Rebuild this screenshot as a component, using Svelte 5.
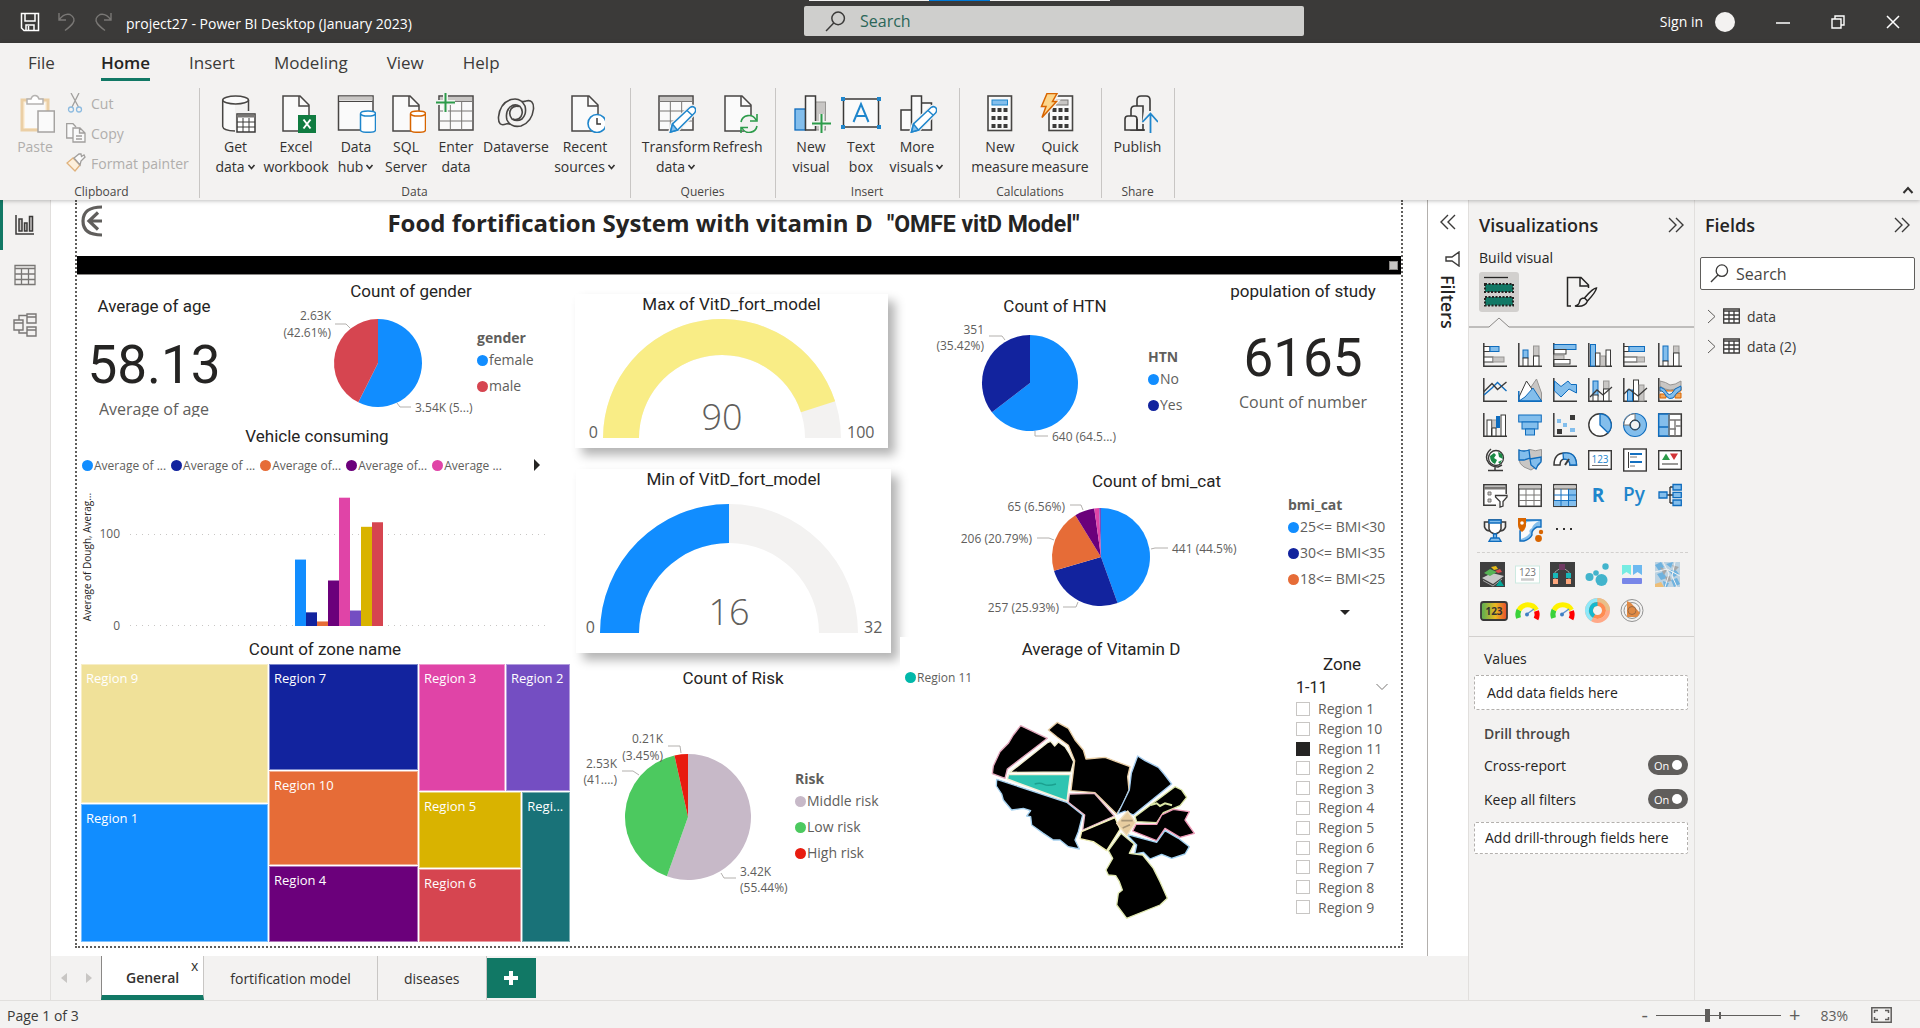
<script>
	let search = $state('')
	let fieldSearch = $state('')
	let zoom = $state(83)
	let activePage = $state('General')
	let crossReport = $state(true)
	let keepFilters = $state(true)

	const menu = ['File', 'Home', 'Insert', 'Modeling', 'View', 'Help']
	const pages = ['General', 'fortification model', 'diseases']
	const tables = ['data', 'data (2)']

	// shared bits of the ribbon icons
	const dark = '#484644'
	const sheet = `<path d="M7 3H24L33 12V38H7Z" fill="#fafafa" stroke="${dark}" stroke-width="1.5"/><path d="M23 3V13H33" fill="none" stroke="${dark}" stroke-width="1.5"/>`
	const pencil = `<path d="M14 39.500L16.500 31L34 14.500Q37 12.500 39 15Q40.500 17.500 38.500 20L21.500 37Z" fill="#fff" stroke="#f3f2f1" stroke-width="4"/><path d="M14.500 39L16.500 31L34 14.500Q37 12.500 39 15Q40.500 17.500 38.500 20L21.500 37Z" fill="#fff" stroke="#1f86cc" stroke-width="1.500"/><path d="M14.500 39L16.500 31L21.500 37Z" fill="#83beec" stroke="#1f86cc" stroke-width="1.500"/><path d="M31 17.500L36 22" stroke="#1f86cc" stroke-width="1.500"/>`
	const cylinder = (color) =>
		`<path d="M24.500 21V37Q24.500 39.300 32 39.300T39.500 37V21" fill="#fff" stroke="${color}" stroke-width="1.500"/><ellipse cx="32" cy="20.500" rx="7.500" ry="2.600" fill="#fff" stroke="${color}" stroke-width="1.500"/>`
	const keys = (x) =>
		[17, 25, 33].map((y) => [0, 6, 12].map((d) => `<rect x="${x + d}" y="${y - 2}" width="4" height="4" fill="#3b3a39"/>`).join('')).join('')
	const grid = (x, y, w, h) =>
		`<rect x="${x}" y="${y}" width="${w}" height="${h}" fill="#fafafa" stroke="${dark}" stroke-width="1.500"/><rect x="${x + 1}" y="${y + 1}" width="${w - 2}" height="4" fill="#c8c6c4"/><path d="M${x} ${y + 5.5}H${x + w}M${x} ${y + 15}H${x + w}M${x} ${y + 25}H${x + w}M${x + w / 3} ${y + 5.5}V${y + h}M${x + (w * 2) / 3} ${y + 5.5}V${y + h}" stroke="#797775"/>`

	const ribbon = [
		{
			label: 'Data',
			items: [
				{ w: 51, lines: ['Get', 'data'], menu: true, icon: `<path d="M6.700 7V34Q7 37 19 38.500V11H33V7" fill="#fafafa"/><path d="M6.700 7V33.500Q7 37.500 19 38M32.500 7V18" fill="none" stroke="${dark}" stroke-width="1.500"/><ellipse cx="19.600" cy="7" rx="12.900" ry="4" fill="#fafafa" stroke="${dark}" stroke-width="1.500"/><rect x="21" y="21" width="18" height="18" fill="#fff" stroke="#3b3a39" stroke-width="1.500"/><path d="M21 23H39" stroke="#797775" stroke-width="3"/><path d="M21 29H39M21 34H39M27 25V39M33 25V39" stroke="#3b3a39"/>` },
				{ w: 70, lines: ['Excel', 'workbook'], icon: `${sheet}<rect x="22" y="22" width="18" height="18" fill="#107c41"/><path d="M27.500 26.500L34.500 35.500M34.500 26.500L27.500 35.500" stroke="#fff" stroke-width="2"/>` },
				{ w: 50, lines: ['Data', 'hub'], menu: true, icon: `<rect x="2.500" y="3" width="34.500" height="34" fill="#fafafa" stroke="${dark}" stroke-width="1.500"/><path d="M3 5.500H36.500" stroke="#c8c6c4" stroke-width="4"/><path d="M3 8.500H36.500" stroke="${dark}"/>${cylinder('#1f86cc')}` },
				{ w: 50, lines: ['SQL', 'Server'], icon: `${sheet}${cylinder('#d86500')}` },
				{ w: 50, lines: ['Enter', 'data'], icon: `${grid(3, 3, 34, 34)}<path d="M9.500 0V19M0 9.500H19" stroke="#f3f2f1" stroke-width="5"/><path d="M9.500 0V19M0 9.500H19" stroke="#2c9b4a" stroke-width="2"/>` },
				{ w: 70, lines: ['Dataverse'], icon: `<g fill="none" stroke="${dark}" stroke-width="1.600"><path d="M10 31Q2 34 2.500 24Q4 10 15 6.500Q25 4 29 13Q31 21 26 26Q21 29 16 26Q12 21 15 16Q18 12 23 13.500"/><path d="M30 8Q38 6 37.500 16Q36 29 25 33Q15 35 11 27Q9 19 14 14Q19 10 24 13.500Q28 18 25 23.500Q22 28 17 26"/><path d="M10 31Q13 30 14 31.500M30 8Q27 9 26 8"/></g>` },
				{ w: 68, lines: ['Recent', 'sources'], menu: true, icon: `${sheet}<circle cx="32" cy="30.500" r="9" fill="#fff" stroke="#1f86cc" stroke-width="1.600"/><path d="M32 25V31H36" fill="none" stroke="#3b3a39" stroke-width="1.500"/>` }
			]
		},
		{
			label: 'Queries',
			items: [
				{ w: 70, lines: ['Transform', 'data'], menu: true, icon: grid(3, 3, 34, 34) + pencil },
				{ w: 53, lines: ['Refresh'], icon: `${sheet}<circle cx="31" cy="31" r="9" fill="#f3f2f1"/><path d="M23 29A8 8 0 0 1 38 27M39 33A8 8 0 0 1 24 35M39 21V28H32M23 41V34.500H30" fill="none" stroke="#2c9b4a" stroke-width="1.600"/>` }
			]
		},
		{
			label: 'Insert',
			items: [
				{ w: 50, lines: ['New', 'visual'], icon: `<rect x="4" y="16" width="10.500" height="21" fill="#83beec" stroke="#0f6cbd" stroke-width="1.300"/><rect x="24.500" y="9" width="10" height="28" fill="#c8c6c4" stroke="#979593"/><rect x="14.500" y="3" width="10" height="34" fill="#fafafa" stroke="#3b3a39" stroke-width="1.500"/><path d="M30.500 21V40M21 30.500H40" stroke="#f3f2f1" stroke-width="5"/><path d="M30.500 21V40M21 30.500H40" stroke="#2c9b4a" stroke-width="2"/>` },
				{ w: 50, lines: ['Text', 'box'], icon: `<rect x="2.500" y="6" width="35" height="28" fill="#fafafa" stroke="#3b3a39" stroke-width="1.500"/><path d="M0 4H4V8H0ZM36 4H40V8H36ZM0 32H4V36H0ZM36 32H40V36H36Z" fill="#1f86cc"/><path d="M12.500 29L20 11L27.500 29M15 23H25" fill="none" stroke="#1f86cc" stroke-width="2"/>` },
				{ w: 62, lines: ['More', 'visuals'], menu: true, icon: `<path d="M4 17H14.500V37H4ZM24.500 10H34.500V37H24.500ZM14.500 3H24.500V37H14.500Z" fill="#fafafa" stroke="#3b3a39" stroke-width="1.500"/>${pencil}` }
			]
		},
		{
			label: 'Calculations',
			items: [
				{ w: 60, lines: ['New', 'measure'], icon: `<rect x="8" y="3" width="23.500" height="34.500" fill="#fafafa" stroke="${dark}" stroke-width="1.600"/><rect x="12" y="7" width="15.500" height="5" fill="#83beec" stroke="#1f86cc"/>${keys(11.5)}` },
				{ w: 60, lines: ['Quick', 'measure'], icon: `<rect x="9" y="3" width="23.500" height="34.500" fill="#fafafa" stroke="${dark}" stroke-width="1.600"/><rect x="16" y="7" width="12" height="5" fill="#c8c6c4" stroke="#797775"/>${keys(12.5)}<path d="M7 .5H17L12.500 8.500H16.500L2 24.500L6 13.500H1.500Z" fill="#fcd68b" stroke="#f3f2f1" stroke-width="4"/><path d="M7 .5H17L12.500 8.500H16.500L2 24.500L6 13.500H1.500Z" fill="#fcd68b" stroke="#d86500" stroke-width="1.500"/>` }
			]
		},
		{
			label: 'Share',
			items: [
				{ w: 51, lines: ['Publish'], icon: `<g fill="#f3f2f1" stroke="#3b3a39" stroke-width="1.600"><path d="M19 37V7Q19 3 23 3H28Q32 3 32 7V37Z"/><path d="M13 37V17Q13 13 17 13H25V37Z"/><path d="M7 37V26Q7 23 10 23H16Q19 23 19 26V37Z"/><path d="M19 37V26" /></g><path d="M26 18H40V40H27V31H24Z" fill="#f3f2f1"/><path d="M26 37H19" stroke="#3b3a39" stroke-width="1.600"/><path d="M32.500 40V21M24.500 29L32.500 20.500L40 29" fill="none" stroke="#1f86cc" stroke-width="1.800"/>` }
			]
		}
	]

	// visual gallery, drawn on a 24px square
	const axis = '<path d="M.8 0V23.200H24" fill="none" stroke="#3b3a39" stroke-width="1.500"/>'
	const b = 'fill="#83beec" stroke="#0f6cbd"'
	const g = 'fill="#c8c6c4" stroke="#979593"'
	const w = 'fill="#fff" stroke="#3b3a39"'
	const gallery = [
		['Stacked bar chart', `${axis}<rect x="1" y="3.500" width="6" height="5" ${w}/><rect x="7" y="3.500" width="9" height="5" ${b}/><rect x="1" y="14" width="9" height="5" ${w}/><rect x="10" y="14" width="11" height="5" ${g}/>`],
		['Stacked column chart', `${axis}<rect x="5" y="7" width="5" height="8" ${b}/><rect x="5" y="15" width="5" height="8" ${w}/><rect x="15.500" y="3" width="5.500" height="10" ${g}/><rect x="15.500" y="13" width="5.500" height="10" ${w}/>`],
		['Clustered bar chart', `${axis}<rect x="1" y="1.500" width="22" height="5" ${b}/><rect x="1" y="6.500" width="12" height="4.500" ${w}/><rect x="1" y="12" width="10" height="4.500" ${g}/><rect x="1" y="16.500" width="16" height="4.500" ${w}/>`],
		['Clustered column chart', `${axis}<rect x="2.500" y="1.500" width="5" height="21.500" ${b}/><rect x="7.500" y="10" width="4.500" height="13" ${w}/><rect x="12.500" y="13" width="5" height="10" ${g}/><rect x="18" y="7" width="4.500" height="16" ${w}/>`],
		['100% stacked bar chart', `${axis}<rect x="1" y="3.500" width="5" height="5" ${w}/><rect x="6" y="3.500" width="15.500" height="5" ${b}/><rect x="1" y="14" width="13" height="5" ${w}/><rect x="14" y="14" width="7.500" height="5" ${g}/>`],
		['100% stacked column chart', `${axis}<rect x="5" y="3" width="5" height="15" ${b}/><rect x="5" y="18" width="5" height="5" ${w}/><rect x="15.500" y="3" width="5.500" height="7" ${g}/><rect x="15.500" y="10" width="5.500" height="13" ${w}/>`],
		['Line chart', `${axis}<path d="M1 17L9 10L14.500 4.500L23.500 13" fill="none" stroke="#0f6cbd" stroke-width="1.400"/><path d="M1 13.500L9 5.500L14.500 11.500L23.500 4" fill="none" stroke="#3b3a39" stroke-width="1.400"/>`],
		['Area chart', `<path d="M11 12L18.500 1L23.500 15V23H16Z" ${g}/><path d="M1 19L8.500 3L16 14L9 23H1Z" ${w}/><path d="M1 23L7 19L15 10L23.500 23Z" ${b}/><path d="M.8 13V23.200H24" fill="none" stroke="#0f6cbd" stroke-width="1.500"/>`],
		['Stacked area chart', `${axis}<path d="M1.500 3L8 8.500L15 3L18 6.500H23.500V15L16 11L8 19L1.500 13Z" ${b}/>`],
		['Line and stacked column chart', `${axis}<rect x="5" y="3" width="5" height="15" ${b}/><rect x="5" y="17" width="5" height="6" ${w}/><rect x="15.500" y="3" width="5.500" height="8" ${g}/><rect x="15.500" y="11" width="5.500" height="12" ${w}/><path d="M2 19L9 12L15 17L24 9" fill="none" stroke="#3b3a39" stroke-width="1.300"/>`],
		['Line and clustered column chart', `${axis}<rect x="4.500" y="12" width="5" height="11" ${b}/><rect x="10.500" y="2" width="5" height="21" ${w}/><rect x="16" y="7" width="5" height="16" ${g}/><path d="M1 16L6 11L15 18L24 10" fill="none" stroke="#3b3a39" stroke-width="1.300"/>`],
		['Ribbon chart', `${axis}<path d="M2 16H8V20H2ZM17 15H23V20H17ZM2 9H23V13H2Z" fill="#f2a65a" stroke="#d86500"/><path d="M2 3Q8 4 12 7Q17 7 23 3V8Q17 12 12 12Q7 12 2 8Z" ${g}/><path d="M2 9Q7 10 10 16Q13 18 17 11L23 8V12Q19 14 15 20Q11 22 8 18Q5 12 2 13Z" ${b}/>`],
		['Waterfall chart', `${axis}<rect x="4" y="7" width="4.500" height="16" ${w}/><rect x="9" y="7" width="4.500" height="8" ${g}/><path d="M13 3H17V15H13Z" fill="#0f6cbd"/><path d="M9 15H13V23H9Z" fill="#fff" stroke="#3b3a39"/><rect x="18" y="2" width="4.500" height="21" ${w}/>`],
		['Funnel', `<rect x=".7" y="2" width="22.600" height="7" ${b}/><rect x="4" y="9" width="16" height="7" ${b}/><rect x="7.500" y="16" width="9" height="6" ${b}/>`],
		['Scatter chart', `${axis}<path d="M17 2H22V7H17ZM4 16H9V21H4Z" fill="#3b3a39"/><path d="M4 6H8V10H4ZM10 10H14V14H10ZM17 15H22V19H17Z" fill="#83beec"/>`],
		['Pie chart', `<circle cx="12" cy="12" r="11.200" ${w} stroke-width="1.400"/><path d="M12 .8A11.200 11.200 0 0 1 20 19.800L12 12Z" ${b} stroke-width="1.300"/>`],
		['Donut chart', `<circle cx="12" cy="12" r="8" fill="none" stroke="#0f6cbd" stroke-width="8"/><circle cx="12" cy="12" r="8" fill="none" stroke="#83beec" stroke-width="5.800"/><path d="M.8 12A11.200 11.200 0 0 1 12 .8V7A5 5 0 0 0 7 12Z" fill="#fff" stroke="#797775"/><circle cx="12" cy="12" r="5" fill="none" stroke="#3b3a39"/>`],
		['Treemap', `<rect x=".7" y="1" width="22.600" height="22" fill="#fff" stroke="#3b3a39" stroke-width="1.500"/><path d="M.7 1H11V23H.7ZM.7 14H11" ${b} stroke-width="1.400"/><path d="M11 7H23M11 16H18M18 13H23M17 7V23M11 1V23" stroke="#797775" stroke-width="1.400"/>`],
		['Map', `<circle cx="13" cy="10" r="7.500" fill="#fff" stroke="#3b3a39" stroke-width="1.300"/><path d="M7 8L11 5L13 7L11 10L14 12L12 16Q7 14 7 8ZM15 4L19 6L20 11L16 9ZM15 14L19 12L17 16Z" fill="#1a8a45"/><path d="M8 1Q2 6 4 12Q7 19 15 19L19 17M12 19V22M5 22.500H20" fill="none" stroke="#3b3a39" stroke-width="1.500"/>`],
		['Filled map', `<path d="M1 2Q6 5 12 1.500Q17 4 23.500 1.500V12L21 17L13 22L6 19Q1 16 1 11Z" ${g}/><path d="M1 2Q5 4 11 2L12 10L6 12H1ZM12 11L23 9V14L20 17L18 21L13 17Z" ${b} stroke-width="1.300"/>`],
		['Gauge', `<path d="M1 17Q1 5 12 5T23.500 17H17Q17 11 12 11T7 17Z" fill="#fff" stroke="#3b3a39" stroke-width="1.500"/><path d="M10 5.200Q23 3 23.500 17H17Q16.500 11 10.500 11Z" ${b} stroke-width="1.300"/><path d="M12 17L16 11" stroke="#3b3a39" stroke-width="2"/>`],
		['Card', `<rect x=".7" y="2.700" width="22.600" height="18.600" ${w} stroke-width="1.400"/><text x="12" y="14.500" text-anchor="middle" font-size="10" fill="#1f86cc">123</text><path d="M4 17.500H20" stroke="#797775"/>`],
		['Multi-row card', `<rect x=".7" y="1" width="22.600" height="22" ${w} stroke-width="1.400"/><path d="M5.500 4V20" stroke="#3b3a39"/><path d="M7 6H19M7 14H19" stroke="#1470c0" stroke-width="2"/><path d="M7 9H14M7 18H12" stroke="#797775"/>`],
		['KPI', `<rect x=".7" y="2.700" width="22.600" height="18.600" ${w} stroke-width="1.400"/><path d="M4 12L8 5.500L12 12Z" fill="#2c9b4a"/><path d="M12 5.500H20L16 12Z" fill="#d13438"/><path d="M4 16H20" stroke="#797775" stroke-width="1.500"/>`],
		['Slicer', `<path d="M13 22.300H.8V1.700H23.200V11" fill="#fff" stroke="#3b3a39" stroke-width="1.500"/><path d="M1 5H23" stroke="#797775" stroke-width="3"/><path d="M5 9H8V12H5ZM5 16H8V19H5Z" fill="#c8c6c4" stroke="#797775"/><path d="M12.500 12.500H24V14L20 18.500V23L17 24V18.500L12.500 14Z" ${w} stroke-width="1.300"/>`],
		['Table', `<rect x=".8" y="1.700" width="22.400" height="21.600" fill="#fff" stroke="#3b3a39" stroke-width="1.500"/><path d="M1 4H23" stroke="#c8c6c4" stroke-width="3"/><path d="M1 6H23" stroke="#3b3a39"/><path d="M1 12H23M1 17.500H23M8 6V23M16 6V23" stroke="#797775"/>`],
		['Matrix', `<rect x=".8" y="1.700" width="22.400" height="21.600" fill="#fff" stroke="#3b3a39" stroke-width="1.500"/><path d="M15.500 6H23V23H1V17.500H15.500Z" fill="#83beec"/><path d="M1 4H23" stroke="#c8c6c4" stroke-width="3"/><path d="M1 6H23" stroke="#3b3a39"/><path d="M1 12H23M1 17.500H23M8 6V23M15.500 6V23" stroke="#1470c0"/>`],
		['R script visual', '<text x="10" y="19" text-anchor="middle" font-size="19" font-weight="700" fill="#1f86cc">R</text>'],
		['Python visual', '<text x="11" y="18" text-anchor="middle" font-size="19" font-weight="600" fill="#1f86cc">Py</text>'],
		['Decomposition tree', `<path d="M9 12H16M12 4V20M12 4H16M12 20H16" fill="none" stroke="#3b3a39" stroke-width="1.400"/><path d="M1 9H9V15H1ZM15 1.500H23.300V7H15ZM15 9.300H23.300V14.700H15ZM15 17H23.300V22.500H15Z" ${b} stroke-width="1.300"/>`],
		['Key influencers', `<path d="M6 4H1.500V9Q3 13 7 13M18 4H22.500V9Q21 13 17 13" fill="none" stroke="#3b3a39" stroke-width="1.600"/><path d="M6 2H18V11Q17 15 12 16Q7 15 6 11Z" ${w} stroke-width="1.500"/><path d="M6 2H18V5H6ZM8 20H16L18 23.300H6ZM10.500 16H13.500V20H10.500Z" ${b} stroke-width="1.300"/>`],
		['Azure map', `<path d="M8 2H23V9H19Q13 12 14 17Q12 21 6 23H2V13Z" ${b} stroke-width="1.400"/><path d="M9 4L21 3Q15 6 14 10Q10 12 12 15Q8 20 3 21V13Z" fill="#fafafa"/><path d="M0 0H8V8Q7 12 4 14Q0 11 0 7Z" fill="#d86500"/><circle cx="4" cy="5" r="1.800" fill="#fff"/><circle cx="20.500" cy="20.500" r="3.400" fill="#d86500"/><circle cx="23" cy="14" r="2.200" fill="#d86500"/>`],
		['Get more visuals', '<path d="M3 10H5V12H3ZM10 10H12V12H10ZM17 10H19V12H17Z" fill="#323130"/>']
	]

	const dial =
		'<g fill="none" stroke-width="5"><path d="M3.500 20A10 10 0 0 1 4 12" stroke="#3ad23a"/><path d="M4 12A10 10 0 0 1 21.500 12" stroke="#fff200"/><path d="M21.500 13A10 10 0 0 1 21 21" stroke="#f00"/></g><path d="M12 16L19 11" stroke="#5a93cf" stroke-width="1.500"/><circle cx="12" cy="16.500" r="2" fill="#3f7fc4"/>'
	const custom = [
		['Synoptic panel', '<path d="M0 0H25V25H0Z" fill="#3f3f3f"/><path d="M2 16L12 11L24 14L13 22Z" fill="#c8c8c8"/><path d="M3 18.500L13 24L22 17" fill="none" stroke="#a5a5a5"/><path d="M4 11L10 7L17 10L10 14Z" fill="#56b356"/><path d="M11 5L16 4L18 7L14 8Z" fill="#e8bd17"/><path d="M15 9L20 7L22 10L18 11Z" fill="#dc4b4b"/><path d="M16 24L20 18L24 24Z" fill="#01a89a"/>'],
		['Card with states', '<rect x=".5" y="4" width="24" height="17" fill="#fff" stroke="#cdeae1"/><text x="12.500" y="13.500" text-anchor="middle" font-size="10" fill="#777">123</text><path d="M6 17.500H19" stroke="#ccc" stroke-width="2.500"/>'],
		['Hierarchy', '<path d="M0 0H25V25H0Z" fill="#3f3f3f"/><path d="M5 12V10L12 5L19 10V20M5 12V20" fill="none" stroke="#999"/><path d="M9 2H15V8H9Z" fill="#6f3a62"/><path d="M3 11H8V16H3ZM16 11H21V16H16Z" fill="#18b8b8"/><path d="M3 17H8V22H3ZM16 17H21V22H16Z" fill="#fda77d"/>'],
		['Bubble scatter', '<g fill="#42b4cc"><circle cx="4.500" cy="15" r="4"/><circle cx="11" cy="11" r="2.800"/><circle cx="20.500" cy="4.500" r="3.200"/><circle cx="16.500" cy="18" r="6"/></g>'],
		['Bookmark', '<path d="M2 3H11V13L6.500 10L2 13Z" fill="#76ece2"/><path d="M13 3H22V13L17.500 10L13 13Z" fill="#6db9f0"/><rect x="2" y="16" width="20" height="6" rx="1" fill="#7886e8"/>'],
		['Shape map', '<path d="M0 0H25V25H0Z" fill="#bdd3e2"/><path d="M0 3L6 0L9 5L4 9ZM11 2L18 0L16 6ZM2 12L8 10L12 16L6 18ZM14 9L20 7L24 12L19 15ZM16 18L22 16L25 22L19 25ZM8 19L14 21L12 25H9Z" fill="#6fb2de"/><path d="M5 5L12 8L9 13ZM17 3L24 5L20 9ZM10 15L15 14L16 19L12 20Z" fill="#a7a7a7"/><path d="M0 22L6 20L9 25H0Z" fill="#edbe78"/><path d="M0 10L12 7L25 14M8 0L14 12L10 25M20 0L17 14L22 25" fill="none" stroke="#f3f3f3"/>'],
		['Advanced card', '<defs><linearGradient id="heat"><stop offset=".1" stop-color="#6ab04c"/><stop offset=".55" stop-color="#eaba20"/><stop offset="1" stop-color="#e84a30"/></linearGradient></defs><rect x="1" y="4" width="26" height="18" rx="2.500" fill="url(#heat)" stroke="#383838" stroke-width="1.800"/><text x="14" y="17" text-anchor="middle" font-size="10" font-weight="700" fill="#333">123</text>'],
		['Dial gauge', dial],
		['Tachometer', dial],
		['Sunburst', '<g fill="none"><circle cx="12.500" cy="12.500" r="10.500" stroke="#ffa988" stroke-width="4"/><path d="M12.500 2A10.500 10.500 0 0 0 7 21.500" stroke="#8de9fa" stroke-width="4"/><path d="M12.500 2A10.500 10.500 0 0 1 23 12.500" stroke="#e8c089" stroke-width="4"/><circle cx="12.500" cy="12.500" r="6.500" stroke="#ff8c52" stroke-width="4"/><path d="M12.500 6A6.500 6.500 0 0 0 9 18" stroke="#12b8cf" stroke-width="4"/></g>'],
		['Radar chart', '<g fill="none" stroke="#929292"><circle cx="12" cy="12.500" r="11"/><circle cx="12" cy="12.500" r="8"/></g><path d="M7 3L11 5L20 15L17 19L7 19Z" fill="#e08a45"/><circle cx="12" cy="12.500" r="4" fill="none" stroke="#9a6a45"/>']
	]

	// the viewBox of every chart is [x, y, width, height] on the report page
	const gender = {
		box: [249, 303, 228, 119], c: [378, 363], r: 44,
		slices: [[3.54, '#118dff'], [2.63, '#d64550']],
		lines: ['335,324 346,324 350,328', '397,403 400,407 411,407'],
		labels: [[331, 320, 'end', '2.63K'], [331, 337, 'end', '(42.61%)'], [415, 412, 'start', '3.54K (5...)']]
	}
	const htn = {
		box: [900, 318, 248, 132], c: [1030, 383], r: 48,
		slices: [[64.58, '#118dff'], [35.42, '#12239e']],
		lines: ['989,336 1002,336 1005,340', '1035,431 1035,436 1048,436'],
		labels: [[984, 334, 'end', '351'], [984, 350, 'end', '(35.42%)'], [1052, 441, 'start', '640 (64.5...)']]
	}
	const bmi = {
		box: [900, 493, 388, 144], c: [1101, 557], r: 49,
		slices: [[44.5, '#118dff'], [25.93, '#12239e'], [20.79, '#e66c37'], [6.56, '#6b007b'], [1.6, '#e044a7'], [0.6, '#744ec2']],
		lines: ['1070,505 1081,505 1083,510', '1037,538 1049,538 1054,540', '1063,607 1076,607 1078,602', '1151,549 1155,548 1168,548'],
		labels: [[1065, 511, 'end', '65 (6.56%)'], [1032, 543, 'end', '206 (20.79%)'], [1059, 612, 'end', '257 (25.93%)'], [1172, 553, 'start', '441 (44.5%)']]
	}
	const risk = {
		box: [573, 690, 222, 256], c: [688, 817], r: 63,
		slices: [[55.44, '#c7b9c8'], [41.11, '#4cc95f'], [3.45, '#e81c0f']],
		lines: ['668,746 680,746 681,753', '622,771 633,771 639,775', '721,873 724,878 736,878'],
		labels: [[663, 743, 'end', '0.21K'], [663, 760, 'end', '(3.45%)'], [617, 768, 'end', '2.53K'], [617, 784, 'end', '(41....)'], [740, 876, 'start', '3.42K'], [740, 892, 'start', '(55.44%)']]
	}

	const foods = [['Average of ...', '#118dff'], ['Average of ...', '#12239e'], ['Average of...', '#e66c37'], ['Average of...', '#6b007b'], ['Average ...', '#e044a7']]
	const bars = [[73, '#118dff'], [15, '#12239e'], [5, '#e66c37'], [50, '#6b007b'], [141, '#e044a7'], [17, '#744ec2'], [109, '#d9b300'], [114, '#d64550']]

	const zones = [1, 10, 11, 2, 3, 4, 5, 6, 7, 8, 9]

	// outline, border colour, fill
	const districts = [
		['182,257 262,295 240,312 142,387 135,415 97,401 100,378 120,335 145,310 160,285', '#e3a9bd'],
		['150,397 262,308 272,304 284,318 295,306 315,320 328,340 341,365 333,396', '#f3eed0'],
		['292,247 325,265 345,300 370,330 378,357 435,352 475,367 510,380 503,410 507,450 490,490 470,522 405,458 333,452 344,362 325,316 292,292 265,270', '#ead0a8'],
		['146,404 331,404 321,483 142,417', '#f7efd8', '#2ec4b1'],
		['110,418 320,487 368,525 355,575 345,600 358,627 325,620 300,600 280,600 250,580 215,555 212,530 200,528 212,512 190,505 155,510 130,480 125,462 109,438', '#a5d0ee'],
		['328,462 403,460 463,528 368,570 374,525 325,487', '#e9b8c6'],
		['465,533 480,568 440,632 400,605 360,596 365,575', '#f0efb4'],
		['533,348 555,362 595,382 612,402 635,432 520,525 495,513 473,522 508,450 514,400', '#a5cdf0'],
		['645,440 665,450 680,472 660,497 610,518 590,548 530,545 525,530', '#dbe6a6'],
		['640,508 688,515 675,540 703,580 660,592 615,565 590,602 518,573 528,553 590,553 605,525', '#ef9ab8'],
		['500,583 590,607 615,572 655,595 688,620 675,642 635,655 605,643 570,657 550,637 524,642 530,615', '#9fd0f0'],
		['483,580 522,612 508,640 548,645 580,685 600,725 622,775 600,795 500,835 470,795 475,760 487,750 478,725 467,707 445,705 438,690 458,655 445,632', '#e0e8b0'],
		['503,513 527,548 500,587 470,550', '#f2e2c4', '#e8cda0']
	]

	function point(cx, cy, r, turn) {
		const a = turn * 2 * Math.PI
		return `${cx + r * Math.sin(a)} ${cy - r * Math.cos(a)}`
	}

	function wedges({ c, r, slices }) {
		const total = slices.reduce((sum, s) => sum + s[0], 0)
		let at = 0
		return slices.map(([value, color]) => {
			const from = at
			at += value / total
			const large = at - from > 0.5 ? 1 : 0
			return { color, d: `M${c[0]} ${c[1]}L${point(...c, r, from)}A${r} ${r} 0 ${large} 1 ${point(...c, r, at)}Z` }
		})
	}

	function ring(c, outer, inner, from, to) {
		const a = from / 2 - 0.25
		const z = to / 2 - 0.25
		return `M${point(...c, outer, a)}A${outer} ${outer} 0 0 1 ${point(...c, outer, z)}L${point(...c, inner, z)}A${inner} ${inner} 0 0 0 ${point(...c, inner, a)}Z`
	}
</script>

{#snippet pie(chart)}
	<svg class="chart" viewBox={chart.box.join(' ')} style:flex-grow={chart.box[2]}>
		{#each wedges(chart) as slice}
			<path d={slice.d} fill={slice.color} />
		{/each}
		{#each chart.lines as points}
			<polyline {points} fill="none" stroke="#b3b0ad" />
		{/each}
		{#each chart.labels as [x, y, anchor, text]}
			<text {x} {y} text-anchor={anchor}>{text}</text>
		{/each}
	</svg>
{/snippet}

{#snippet legend(title, entries)}
	<div class="legend">
		<strong>{title}</strong>
		{#each entries as [name, color]}
			<span><i style:background={color}></i>{name}</span>
		{/each}
	</div>
{/snippet}

{#snippet gauge(box, c, outer, inner, share, color, value, max)}
	<svg class="gauge" viewBox={box.join(' ')}>
		<path d={ring(c, outer, inner, 0, 1)} fill="#f3f2f1" />
		<path d={ring(c, outer, inner, 0, share)} fill={color} />
		<text class="value" x={c[0]} y={c[1] - 8} text-anchor="middle">{value}</text>
		<text x={c[0] - outer - 5} y={c[1]} text-anchor="end">0</text>
		<text x={c[0] + outer + 6} y={c[1]}>{max}</text>
	</svg>
{/snippet}

{#snippet cell(name, size, color)}
	<div class="cell" style:flex-grow={size} style:background={color}>{name}</div>
{/snippet}

{#snippet chevrons(d)}
	<svg width="16" height="16" viewBox="0 0 16 16" fill="none" stroke="#3b3a39" stroke-width="1.400"><path {d} /></svg>
{/snippet}

{#snippet magnifier(size)}
	<svg width={size} height={size} viewBox="0 0 20 20" fill="none" stroke="#3b3a39" stroke-width="1.400">
		<circle cx="12.500" cy="7" r="6" /><path d="M8.300 11.500L1 19" />
	</svg>
{/snippet}

<div class="window">
	<header class="titlebar">
		<span class="dock"></span>
		<button class="plain" aria-label="Save">
			<svg width="20" height="20" viewBox="0 0 20 20" fill="none" stroke="#fff" stroke-width="1.500"><path d="M1.500 1.500H18.500V18.500H4L1.500 16ZM5 1.500V9H15V1.500M6 18V13H14V18M8.500 14V18" /></svg>
		</button>
		<button class="plain" aria-label="Undo">
			<svg width="18" height="20" viewBox="0 0 18 20" fill="none" stroke="#797775" stroke-width="1.400"><path d="M1 1V8H8M1 8Q6 1 12 2.500Q18 6 15 11Q13 14 7 18.500" /></svg>
		</button>
		<button class="plain" aria-label="Redo">
			<svg width="18" height="20" viewBox="0 0 18 20" fill="none" stroke="#797775" stroke-width="1.400"><path d="M17 1V8H10M17 8Q12 1 6 2.500Q0 6 3 11Q5 14 11 18.500" /></svg>
		</button>
		<span class="file">project27 - Power BI Desktop (January 2023)</span>
		<label class="finder">
			{@render magnifier(21)}
			<input type="text" placeholder="Search" aria-label="Search" bind:value={search} />
		</label>
		<div class="account">
			<button class="plain signin">Sign in <i></i></button>
			<button class="plain" aria-label="Minimize"><svg width="14" height="14" viewBox="0 0 14 14"><path d="M0 8H14" stroke="#fff" stroke-width="1.500" /></svg></button>
			<button class="plain" aria-label="Restore"><svg width="14" height="14" viewBox="0 0 14 14" fill="none" stroke="#fff" stroke-width="1.400"><path d="M1 4H10V13H1ZM4 4V1H13V10H10" /></svg></button>
			<button class="plain" aria-label="Close"><svg width="14" height="14" viewBox="0 0 14 14" stroke="#fff" stroke-width="1.500"><path d="M1 1L13 13M13 1L1 13" /></svg></button>
		</div>
	</header>

	<section class="ribbon">
		<nav class="menu">
			{#each menu as item}
				<button class:active={item === 'Home'}>{item}</button>
			{/each}
		</nav>
		<div class="groups">
			<div class="group clipboard">
				<div class="tools">
					<button class="tool paste" disabled>
						<svg width="40" height="40" viewBox="0 0 40 40">
							<path d="M7 7H33V37H7Z" fill="#fdf0dc" stroke="#ebcfa5" stroke-width="3" />
							<path d="M10 10H30V35H10Z" fill="#fafafa" />
							<path d="M12 6H16Q17 2.500 20 2.500T24 6H28V11H12Z" fill="#fff" stroke="#b5b3b1" stroke-width="1.500" />
							<path d="M23 18H39.300V39H23Z" fill="#fafafa" stroke="#a5a3a1" stroke-width="1.500" />
						</svg>
						<span>Paste</span>
					</button>
					<div class="small">
						<button disabled>
							<svg width="20" height="20" viewBox="0 0 20 20" fill="none" stroke="#a19f9d" stroke-width="1.300"><path d="M5 0L12.500 14M13 0L6 14" /><g stroke="#8dbbe0"><circle cx="5" cy="16.500" r="2.500" /><circle cx="13" cy="16.500" r="2.500" /></g></svg>
							Cut
						</button>
						<button disabled>
							<svg width="20" height="20" viewBox="0 0 20 20" fill="#fafafa" stroke="#a19f9d" stroke-width="1.300"><path d="M7 15H.7V.7H7L10 4" /><path d="M7 5H14L19 10V19H7ZM13.500 5V10H19M10 13H16M10 16H16" /></svg>
							Copy
						</button>
						<button disabled>
							<svg width="20" height="20" viewBox="0 0 20 20" stroke-width="1.300"><path d="M7 5L1 10L9 18L14 12Z" fill="#fdf0dc" stroke="#e0b27c" /><path d="M8 5L13 1H15L15.500 3.500L18 2L19 4L15 8L14 12Z" fill="#fafafa" stroke="#a19f9d" /></svg>
							Format painter
						</button>
					</div>
				</div>
				<span class="caption">Clipboard</span>
			</div>
			{#each ribbon as group}
				<div class="group">
					<div class="tools">
						{#each group.items as item}
							<button class="tool" style:width="{item.w}px">
								<svg width="40" height="40" viewBox="0 0 40 40">{@html item.icon}</svg>
								{#each item.lines as line, i}
									<span>
										{line}{#if item.menu && i === 1}<svg width="9" height="6" viewBox="0 0 9 6"><path d="M1.500 1L4.500 4.500L7.500 1" fill="none" stroke="#323130" stroke-width="1.600" /></svg>{/if}
									</span>
								{/each}
							</button>
						{/each}
					</div>
					<span class="caption">{group.label}</span>
				</div>
			{/each}
			<button class="plain collapse" aria-label="Collapse the ribbon">
				<svg width="12" height="8" viewBox="0 0 12 8" fill="none" stroke="#323130" stroke-width="2"><path d="M1.500 7L6 2L10.500 7" /></svg>
			</button>
		</div>
	</section>

	<div class="workspace">
		<nav class="views">
			<button class="active" aria-label="Report view">
				<svg width="20" height="20" viewBox="0 0 20 20" fill="none" stroke="#3b3a39" stroke-width="1.500"><path d="M1 0V19H19" /><g fill="#c8c6c4"><path d="M4 4H7V16H4ZM9.500 8H12V16H9.500ZM14.500 1.500H17.500V16H14.500Z" /></g></svg>
			</button>
			<button aria-label="Data view">
				<svg width="22" height="22" viewBox="0 0 22 22" fill="none" stroke="#797775" stroke-width="1.300"><path d="M1 1.500H21V20.500H1ZM1 4.500H21M1 10H21M1 15.500H21M7.500 4.500V20M14.500 4.500V20" /></svg>
			</button>
			<button aria-label="Model view">
				<svg width="24" height="24" viewBox="0 0 24 24" fill="none" stroke="#797775" stroke-width="1.400"><path d="M14 1H23V10H14ZM14 4H23M14 14H23V23H14ZM14 17H23M1 7H10V17H1ZM1 10H10M6 7V2.500H14M6 17V20H14" /></svg>
			</button>
		</nav>

		<div class="center">
			<div class="stage">
				<main class="canvas">
					<article class="page">
						<div class="heading">
							<svg class="back" width="22" height="32" viewBox="0 0 22 32" fill="none" stroke="#605e5c" stroke-width="3.200"><path d="M21 2Q2 2 2 16T21 30M21 16H8M17 7.500L8 16L17 24.500" /></svg>
							<h1>Food fortification System with vitamin D <span>"OMFE vitD Model"</span></h1>
						</div>
						<div class="rule"><i></i></div>
						<div class="columns">
							<div class="column">
								<div class="top-left">
									<section class="kpi age">
										<h2>Average of age</h2>
										<b>58.13</b>
										<p>Average of age</p>
									</section>
									<section class="gender">
										<h2>Count of gender</h2>
										<div class="row">
											{@render pie(gender)}
											{@render legend('gender', gender.slices.map((s, i) => [['female', 'male'][i], s[1]]))}
										</div>
									</section>
								</div>
								<section class="vehicle">
									<h2>Vehicle consuming</h2>
									<div class="keys">
										{#each foods as [name, color]}
											<span><i style:background={color}></i>{name}</span>
										{/each}
										<button class="plain" aria-label="Next"><svg width="6" height="12" viewBox="0 0 6 12"><path d="M0 0L6 6L0 12Z" fill="#252423" /></svg></button>
									</div>
									<svg class="chart" viewBox="77 475 496 162">
										<path d="M130 534.500H549M130 625.500H549" stroke="#c8c6c4" stroke-dasharray="1 5" />
										{#each bars as [value, color], i}
											<rect x={295 + i * 11} y={626 - value * 0.91} width="11" height={value * 0.91} fill={color} />
										{/each}
										<text x="120" y="538" text-anchor="end">100</text>
										<text x="120" y="630" text-anchor="end">0</text>
										<text class="axis" transform="translate(91 557) rotate(-90)" text-anchor="middle">Average of Dough, Averag...</text>
									</svg>
								</section>
								<section class="zone">
									<h2>Count of zone name</h2>
									<div class="treemap">
										<div class="stack" style:flex-grow="187">
											{@render cell('Region 9', 139, '#f0e199')}
											{@render cell('Region 1', 137, '#118dff')}
										</div>
										<div class="stack" style:flex-grow="149">
											{@render cell('Region 7', 107, '#12239e')}
											{@render cell('Region 10', 94, '#e66c37')}
											{@render cell('Region 4', 75, '#6b007b')}
										</div>
										<div class="stack" style:flex-grow="151">
											<div class="split" style:flex-grow="127">
												{@render cell('Region 3', 87, '#e044a7')}
												{@render cell('Region 2', 63, '#744ec2')}
											</div>
											<div class="split" style:flex-grow="150">
												<div class="stack" style:flex-grow="103">
													{@render cell('Region 5', 76, '#d9b300')}
													{@render cell('Region 6', 73, '#d64550')}
												</div>
												{@render cell('Regi...', 42, '#197278')}
											</div>
										</div>
									</div>
								</section>
							</div>

							<div class="column middle">
								<section class="card max">
									<h2>Max of VitD_fort_model</h2>
									{@render gauge([575, 314, 313, 134], [722, 438], 119, 83, 0.9, '#f9ed86', 90, 100)}
								</section>
								<section class="card min">
									<h2>Min of VitD_fort_model</h2>
									{@render gauge([576, 489, 315, 164], [729, 633], 129, 90, 0.5, '#118dff', 16, 32)}
								</section>
								<section class="risk">
									<h2>Count of Risk</h2>
									<div class="row">
										{@render pie(risk)}
										{@render legend('Risk', risk.slices.map((s, i) => [['Middle risk', 'Low risk', 'High risk'][i], s[1]]))}
									</div>
								</section>
							</div>

							<div class="column">
								<div class="top-right">
									<section class="htn">
										<h2>Count of HTN</h2>
										<div class="row">
											{@render pie(htn)}
											{@render legend('HTN', htn.slices.map((s, i) => [['No', 'Yes'][i], s[1]]))}
										</div>
									</section>
									<section class="kpi study">
										<h2>population of study</h2>
										<b>6165</b>
										<p>Count of number</p>
									</section>
								</div>
								<section class="bmi">
									<h2>Count of bmi_cat</h2>
									<div class="row">
										{@render pie(bmi)}
										<div class="more">
											{@render legend('bmi_cat', bmi.slices.slice(0, 3).map((s, i) => [['25<= BMI<30', '30<= BMI<35', '18<= BMI<25'][i], s[1]]))}
											<button class="plain" aria-label="Next"><svg width="10" height="5" viewBox="0 0 10 5"><path d="M0 0H10L5 5Z" fill="#252423" /></svg></button>
										</div>
									</div>
								</section>
								<div class="bottom-right">
									<section class="vitamin">
										<h2>Average of Vitamin D</h2>
										<div class="keys"><span><i style:background="#01b8aa"></i>Region 11</span></div>
										<svg class="chart" viewBox="-180 141 1164 774">
											{#each districts as [points, stroke, fill]}
												<polygon {points} fill={fill ?? '#000'} {stroke} stroke-width="4" stroke-linejoin="round" />
											{/each}
											<path d="M224 432Q240 427 252 433T288 432" fill="none" stroke="#1ba08f" stroke-width="4" />
											<path d="M572 495L590 490L600 498L615 490L636 496" fill="none" stroke="#dbe6a6" stroke-width="6" />
											<path d="M484 542H518M488 564L510 554" fill="none" stroke="#a99677" stroke-width="5" />
										</svg>
									</section>
									<section class="slicer">
										<h2>Zone</h2>
										<button class="plain drop">
											1-11
											<svg width="12" height="8" viewBox="0 0 12 8" fill="none" stroke="#797775"><path d="M.5 1L6 6.500L11.500 1" /></svg>
										</button>
										<div class="options">
											{#each zones as zone}
												<label><input type="checkbox" checked={zone === 11} />Region {zone}</label>
											{/each}
										</div>
									</section>
								</div>
							</div>
						</div>
					</article>
				</main>
				<aside class="filters">
					<button class="plain" aria-label="Expand">{@render chevrons('M8 1L1 8L8 15M15 1L8 8L15 15')}</button>
					<svg width="16" height="16" viewBox="0 0 16 16" fill="none" stroke="#3b3a39" stroke-width="1.400"><path d="M15 1V15L8 10H2V6H8Z" /></svg>
					<h3>Filters</h3>
				</aside>
			</div>
			<footer class="pages">
				<button class="plain turn" aria-label="Previous page"><svg width="6" height="10" viewBox="0 0 6 10"><path d="M6 0V10L0 5Z" fill="#c8c6c4" /></svg></button>
				<button class="plain turn" aria-label="Next page"><svg width="6" height="10" viewBox="0 0 6 10"><path d="M0 0V10L6 5Z" fill="#c8c6c4" /></svg></button>
				{#each pages as page}
					<button class="tab" class:active={page === activePage} onclick={() => (activePage = page)}>
						{page}{#if page === activePage}<span class="close">x</span>{/if}
					</button>
				{/each}
				<button class="add" aria-label="New page"><svg width="14" height="14" viewBox="0 0 14 14"><path d="M7 0V14M0 7H14" stroke="#fff" stroke-width="4" /></svg></button>
			</footer>
		</div>

		<aside class="pane visuals">
			<div class="pane-head">
				<h3>Visualizations</h3>
				<button class="plain" aria-label="Collapse">{@render chevrons('M1 1L8 8L1 15M8 1L15 8L8 15')}</button>
			</div>
			<h4>Build visual</h4>
			<div class="modes">
				<button class="active" aria-label="Build visual">
					<svg width="32" height="32" viewBox="0 0 32 32"><path d="M1 1.500H25" stroke="#252423" stroke-width="1.300" /><path d="M2 8H30V16H2ZM2 21H30V29.500H2Z" fill="#117865" stroke="#252423" stroke-width="2" stroke-dasharray="2 1.500" /></svg>
				</button>
				<button aria-label="Format page">
					<svg width="32" height="32" viewBox="0 0 32 32" fill="none" stroke="#252423" stroke-width="1.500"><path d="M5 30H1.500V1.500H15L22.500 9V12M14 1.500V10H23" /><path d="M30.500 12Q27 12 18.500 22L21.500 25Q30 16 30.500 12ZM18.500 22Q14 22 13.500 26Q13 29 9 30Q19 31.500 21.500 25" /></svg>
				</button>
			</div>
			<svg class="notch" viewBox="0 0 225 12"><path d="M0 11H20L30 2L40 11H225" fill="none" stroke="#8a8886" /></svg>
			<div class="gallery">
				{#each gallery as [name, icon]}
					<button aria-label={name}><svg width="24" height="24" viewBox="0 0 24 24">{@html icon}</svg></button>
				{/each}
			</div>
			<div class="gallery custom">
				{#each custom as [name, icon]}
					<button aria-label={name}><svg width="25" height="25" viewBox="0 0 25 25">{@html icon}</svg></button>
				{/each}
			</div>
			<div class="wells">
				<h4>Values</h4>
				<div class="well tall">Add data fields here</div>
				<h4 class="drill">Drill through</h4>
				<label class="toggle">
					Cross-report
					<span><input type="checkbox" bind:checked={crossReport} />{crossReport ? 'On' : 'Off'}</span>
				</label>
				<label class="toggle">
					Keep all filters
					<span><input type="checkbox" bind:checked={keepFilters} />{keepFilters ? 'On' : 'Off'}</span>
				</label>
				<div class="well">Add drill-through fields here</div>
			</div>
		</aside>

		<aside class="pane fields">
			<div class="pane-head">
				<h3>Fields</h3>
				<button class="plain" aria-label="Collapse">{@render chevrons('M1 1L8 8L1 15M8 1L15 8L8 15')}</button>
			</div>
			<label class="field-search">
				{@render magnifier(19)}
				<input type="text" placeholder="Search" aria-label="Search fields" bind:value={fieldSearch} />
			</label>
			{#each tables as table}
				<button class="table">
					<svg width="9" height="15" viewBox="0 0 9 15" fill="none" stroke="#605e5c"><path d="M1 1L8 7.500L1 14" /></svg>
					<svg width="17" height="16" viewBox="0 0 17 16" fill="#fff" stroke="#3b3a39" stroke-width="1.300"><path d="M.7 1H16.300V15H.7ZM.7 3H16.300M.7 7H16.300M.7 11H16.300M6 3V15M11 3V15" /></svg>
					{table}
				</button>
			{/each}
		</aside>
	</div>

	<footer class="status">
		<span>Page 1 of 3</span>
		<div class="zoom">
			<button class="plain" aria-label="Zoom out">-</button>
			<input type="range" min="10" max="190" bind:value={zoom} aria-label="Zoom" />
			<button class="plain" aria-label="Zoom in">+</button>
			<span class="percent">{zoom}%</span>
			<button class="plain" aria-label="Fit to page">
				<svg width="21" height="16" viewBox="0 0 21 16" fill="none" stroke="#605e5c" stroke-width="1.500"><path d="M.8.8H20.200V15.200H.8Z" /><path d="M3.500 6V3.500H7M14 3.500H17.500V6M17.500 10V12.500H14M7 12.500H3.500V10" /></svg>
			</button>
		</div>
	</footer>
</div>

<style>
	:global(body) {
		margin: 0;
	}
	.window {
		--green: #117865;
		--line: #e1dfdd;
		background: #f3f2f1;
		color: #252423;
		display: flex;
		flex-direction: column;
		font-family: 'Open Sans', 'Noto Sans', sans-serif;
		font-size: 14px;
		min-height: 100vh;
	}
	.window * {
		box-sizing: border-box;
	}
	svg {
		display: block;
		flex: none;
	}
	button,
	input {
		background: none;
		border: none;
		color: inherit;
		font: inherit;
		margin: 0;
		padding: 0;
	}
	h1,
	h2,
	h3,
	h4,
	p {
		font-weight: normal;
		margin: 0;
	}
	.plain {
		align-items: center;
		display: flex;
		justify-content: center;
	}

	.titlebar {
		align-items: center;
		background: #3b3a39;
		color: #fff;
		display: flex;
		gap: 18px;
		height: 43px;
		padding: 0 20px;
		position: relative;
	}
	.dock {
		background: linear-gradient(90deg, #f3f2f1 40%, #0078d4 40% 60%, #f3f2f1 60%);
		height: 1px;
		left: 809px;
		position: absolute;
		top: 0;
		width: 301px;
	}
	.file {
		flex: 1;
		margin-left: -4px;
		padding-top: 4px;
	}
	.finder {
		align-items: center;
		background: #cfcfcd;
		border-radius: 2px;
		color: #2b6658;
		display: flex;
		flex: none;
		font-size: 16px;
		gap: 14px;
		height: 30px;
		margin-bottom: 1px;
		padding-left: 21px;
		width: 500px;
	}
	.finder input {
		flex: 1;
		outline: none;
	}
	input::placeholder {
		color: inherit;
		opacity: 1;
	}
	.account {
		display: flex;
		flex: none;
		gap: 41px;
		justify-content: flex-end;
		width: 578px;
	}
	.signin {
		gap: 12px;
	}
	.signin i {
		background: #f3f2f1;
		border-radius: 50%;
		height: 20px;
		width: 20px;
	}

	.ribbon {
		box-shadow: 0 1px 4px rgb(0 0 0 / 25%);
		height: 157px;
		position: relative;
		z-index: 2;
	}
	.menu {
		display: flex;
		font-size: 17px;
		gap: 39px;
		height: 45px;
		padding: 0 28px;
	}
	.menu button {
		border-bottom: 3px solid transparent;
		color: #3b3a39;
		height: 38px;
		padding-top: 4px;
	}
	.menu button:first-child {
		margin-right: 7px;
	}
	.menu .active {
		border-color: var(--green);
		color: #252423;
		font-weight: 600;
	}
	.groups {
		display: flex;
	}
	.group {
		border-right: 1px solid #c8c6c4;
		display: flex;
		flex-direction: column;
		height: 110px;
		padding: 5px 11px 0 10px;
	}
	.tools {
		display: flex;
		flex: 1;
	}
	.tool {
		align-items: center;
		display: flex;
		flex-direction: column;
		white-space: nowrap;
	}
	.tool > svg {
		margin-bottom: 4px;
	}
	.tool span {
		align-items: center;
		color: #323130;
		display: flex;
		gap: 2px;
		line-height: 20px;
	}
	.caption {
		color: #484644;
		font-size: 12px;
		line-height: 12px;
		text-align: center;
	}
	.clipboard {
		padding-left: 15px;
		width: 200px;
	}
	.paste span,
	.small {
		color: #b0aeac;
	}
	.small {
		display: flex;
		flex-direction: column;
		gap: 10px;
		margin-left: 11px;
	}
	.small button {
		align-items: center;
		display: flex;
		gap: 5px;
		height: 20px;
		white-space: nowrap;
	}
	.collapse {
		align-self: flex-end;
		margin: 0 6px 4px auto;
	}

	.workspace {
		display: flex;
		flex: 1;
	}
	.views {
		border-right: 1px solid var(--line);
		display: flex;
		flex: none;
		flex-direction: column;
		width: 51px;
	}
	.views button {
		border-left: 3px solid transparent;
		display: grid;
		height: 50px;
		padding-right: 3px;
		place-items: center;
	}
	.views .active {
		border-color: var(--green);
	}
	.center {
		display: flex;
		flex: 1;
		flex-direction: column;
		min-width: 0;
	}
	.stage {
		background: #fff;
		display: flex;
		flex: 1;
	}
	.canvas {
		flex: 1;
		min-width: 0;
		padding: 0 24px 8px;
	}
	.page {
		border: 2px dotted #605e5c;
		border-top: none;
	}
	.heading {
		align-items: center;
		display: flex;
		height: 56px;
		padding-left: 4px;
	}
	.back {
		margin-bottom: 14px;
	}
	h1 {
		flex: 1;
		font-size: 24px;
		font-weight: 700;
		line-height: 28px;
		margin-bottom: 9px;
		padding-right: 37px;
		text-align: center;
	}
	h1 span {
		font-family: Roboto, sans-serif;
		font-size: 23px;
		margin-left: 8px;
	}
	.rule {
		align-items: center;
		background: #000;
		border-bottom: 1px solid #8a8886;
		display: flex;
		height: 19px;
		justify-content: flex-end;
		padding-right: 3px;
	}
	.rule i {
		background: #c8c6c4;
		border: 1px solid #8a8886;
		height: 9px;
		width: 9px;
	}
	.columns {
		display: grid;
		grid-template-columns: 496fr 327fr 501fr;
	}
	.column {
		min-width: 0;
	}
	h2 {
		font-family: Roboto, 'Open Sans', sans-serif;
		font-size: 17px;
		line-height: 24px;
		text-align: center;
		white-space: nowrap;
	}
	.row {
		align-items: flex-start;
		display: flex;
	}
	.chart {
		fill: #605e5c;
		flex: 1 1 0;
		font-size: 12px;
		min-width: 0;
		width: 100%;
	}
	.row .chart {
		width: auto;
	}
	.legend {
		color: #605e5c;
		display: flex;
		flex: none;
		flex-direction: column;
		font-size: 14px;
		gap: 6px;
		line-height: 20px;
		white-space: nowrap;
	}
	.legend strong {
		font-weight: 700;
		margin-bottom: -4px;
	}
	.legend span,
	.keys span {
		align-items: center;
		display: flex;
		gap: 1px;
	}
	.legend i,
	.keys i {
		border-radius: 50%;
		flex: none;
		height: 11px;
		width: 11px;
	}
	.keys {
		align-items: center;
		color: #605e5c;
		display: flex;
		font-size: 12px;
		gap: 5px;
		height: 20px;
		white-space: nowrap;
	}
	.top-left {
		display: grid;
		grid-template-columns: 154fr 324fr;
		column-gap: 18px;
		height: 147px;
	}
	.kpi {
		align-items: center;
		display: flex;
		flex-direction: column;
	}
	.kpi b {
		font-family: Roboto, sans-serif;
		font-size: 53px;
		font-weight: 400;
		line-height: 64px;
	}
	.kpi p {
		color: #605e5c;
		font-size: 16px;
		line-height: 24px;
	}
	.age {
		padding-top: 19px;
	}
	.age b {
		margin-top: 15px;
	}
	.age p {
		height: 20px;
		overflow: hidden;
	}
	.study {
		padding: 4px 5px 0 0;
	}
	.study b {
		margin-top: 23px;
	}
	.gender {
		padding-top: 4px;
	}
	.gender .legend {
		padding-top: 25px;
		width: 96px;
	}
	.vehicle {
		padding-top: 2px;
	}
	.vehicle h2 {
		padding-right: 16px;
	}
	.vehicle .keys {
		margin-top: 7px;
		padding: 0 33px 0 5px;
	}
	.vehicle .keys button {
		margin-left: auto;
	}
	.axis {
		fill: #252423;
		font-size: 10px;
	}
	.treemap {
		display: flex;
		gap: 1px;
		height: 278px;
		margin: 3px 3px 4px 4px;
	}
	.stack,
	.split {
		display: flex;
		flex-basis: 0;
		gap: 1px;
		min-height: 0;
		min-width: 0;
	}
	.stack {
		flex-direction: column;
	}
	.cell {
		border: 1px solid rgb(255 255 255 / 45%);
		color: #fff;
		flex-basis: 0;
		font-size: 13px;
		line-height: 18px;
		min-height: 0;
		min-width: 0;
		padding: 4px 0 0 4px;
		white-space: nowrap;
	}
	.card {
		background: #fff;
		box-shadow: 7px 7px 10px rgb(0 0 0 / 30%);
	}
	.card h2 {
		line-height: 20px;
	}
	.max {
		margin: 19px 12px 21px 2px;
	}
	.min {
		margin: 0 9px 0 3px;
	}
	.gauge {
		fill: #605e5c;
		font-size: 16px;
		width: 100%;
	}
	.value {
		font-family: 'Open Sans', sans-serif;
		font-size: 36px;
		font-weight: 300;
	}
	.risk {
		padding-top: 13px;
	}
	.risk h2 {
		padding-right: 7px;
	}
	.risk .legend {
		padding-top: 79px;
		width: 105px;
	}
	.top-right {
		display: grid;
		grid-template-columns: 310fr 191fr;
	}
	.htn {
		padding-top: 19px;
	}
	.htn .legend {
		padding-top: 29px;
		width: 62px;
	}
	.bmi {
		padding-top: 19px;
	}
	.bmi h2 {
		padding-left: 12px;
	}
	.more {
		flex: none;
		padding-top: 2px;
		width: 113px;
	}
	.more button {
		margin: 21px auto 0;
	}
	.bottom-right {
		background: #fff;
		display: flex;
		position: relative;
	}
	.vitamin {
		flex: 1;
		min-width: 0;
	}
	.vitamin h2 {
		padding-left: 14px;
	}
	.vitamin .keys {
		margin-top: 6px;
		padding-left: 5px;
	}
	.slicer {
		flex: none;
		padding: 15px 5px 0 0;
		width: 113px;
	}
	.drop {
		font-family: Roboto, sans-serif;
		font-size: 16px;
		height: 22px;
		justify-content: space-between;
		margin-bottom: 1px;
		padding: 0 8px;
		width: 100%;
	}
	.options {
		color: #605e5c;
		display: flex;
		flex-direction: column;
		height: 218px;
		justify-content: space-between;
		padding-left: 8px;
	}
	.options label {
		align-items: center;
		display: flex;
		gap: 8px;
		height: 20px;
	}
	.options input {
		appearance: none;
		border: 1px solid #c8c6c4;
		height: 14px;
		width: 14px;
	}
	.options input:checked {
		background: #252423;
		border-color: #252423;
	}

	.filters {
		align-items: center;
		border-left: 1px solid #b3b0ad;
		display: flex;
		flex: none;
		flex-direction: column;
		padding-top: 14px;
		width: 41px;
	}
	.filters > svg {
		margin: 21px 0 8px 8px;
	}
	h3 {
		font-size: 18px;
		font-weight: 600;
		line-height: 24px;
	}
	.filters h3 {
		writing-mode: vertical-rl;
	}

	.pages {
		align-items: stretch;
		display: flex;
		height: 44px;
	}
	.turn {
		width: 25px;
	}
	.tab {
		border-right: 1px solid #c8c6c4;
		color: #323130;
		padding: 0 26px;
		position: relative;
	}
	.tab.active {
		background: #fff;
		border-bottom: 5px solid var(--green);
		border-left: 1px solid #8a8886;
		font-weight: 600;
		padding: 4px 24px 0;
	}
	.close {
		font-weight: 400;
		position: absolute;
		right: 5px;
		top: 0;
	}
	.add {
		background: var(--green);
		display: grid;
		margin: 2px 0;
		place-items: center;
		width: 49px;
	}

	.pane {
		border-left: 1px solid var(--line);
		flex: none;
		width: 226px;
	}
	.pane-head {
		display: flex;
		justify-content: space-between;
		padding: 13px 10px 0;
	}
	h4 {
		font-size: 14px;
		line-height: 20px;
	}
	.visuals > h4 {
		padding: 11px 10px 4px;
	}
	.modes {
		display: flex;
		gap: 43px;
		padding-left: 10px;
	}
	.modes button {
		border-radius: 3px;
		display: grid;
		height: 40px;
		place-items: center;
		width: 40px;
	}
	.modes .active {
		background: #d2d0ce;
	}
	.notch {
		margin: 4px 0 13px;
		width: 100%;
	}
	.gallery {
		display: grid;
		gap: 11px;
		grid-template-columns: repeat(6, 24px);
		margin: 0 6px 0 8px;
		padding: 2px 6px 10px;
	}
	.gallery svg {
		overflow: visible;
	}
	.custom {
		border-top: 1px dashed #d2d0ce;
		gap: 11px 10px;
		grid-template-columns: repeat(6, 25px);
		padding: 9px 3px 13px;
	}
	.wells {
		border-top: 1px solid #d2d0ce;
		padding: 12px 6px 0 5px;
	}
	.wells h4 {
		padding-left: 10px;
	}
	.well {
		background: #fff;
		border: 1px dashed #b3b0ad;
		border-radius: 2px;
		line-height: 30px;
		margin-top: 13px;
		padding-left: 10px;
		white-space: nowrap;
	}
	.well.tall {
		line-height: 33px;
		margin-top: 6px;
		padding-left: 12px;
	}
	.wells .drill {
		color: #484644;
		font-weight: 600;
		padding-top: 14px;
	}
	.toggle {
		align-items: center;
		display: flex;
		height: 20px;
		justify-content: space-between;
		margin-top: 11px;
		padding-left: 10px;
	}
	.toggle + .toggle {
		margin-top: 14px;
	}
	.toggle span {
		align-items: center;
		background: #605e5c;
		border-radius: 10px;
		color: #fff;
		display: flex;
		flex-direction: row-reverse;
		font-size: 11px;
		height: 20px;
		justify-content: space-between;
		padding: 0 6px;
		width: 40px;
	}
	.toggle input {
		appearance: none;
		background: #fff;
		border-radius: 50%;
		height: 10px;
		width: 10px;
	}
	.field-search {
		align-items: center;
		background: #fff;
		border: 1px solid #605e5c;
		border-radius: 2px;
		display: flex;
		font-size: 16px;
		gap: 7px;
		height: 33px;
		margin: 20px 5px 11px;
		padding-left: 9px;
	}
	.field-search input {
		color: #484644;
		flex: 1;
		min-width: 0;
		outline: none;
	}
	.table {
		align-items: center;
		color: #3b3a39;
		display: flex;
		gap: 7px;
		height: 30px;
		padding-left: 12px;
	}

	.status {
		align-items: center;
		border-top: 1px solid var(--line);
		color: #3b3a39;
		display: flex;
		height: 28px;
		justify-content: space-between;
		padding: 1px 28px 0 7px;
	}
	.zoom {
		align-items: center;
		color: #605e5c;
		display: flex;
		gap: 8px;
	}
	.zoom button {
		font-size: 20px;
		line-height: 20px;
	}
	.zoom input {
		appearance: none;
		background: linear-gradient(#605e5c, #605e5c) center / 100% 1px no-repeat, linear-gradient(#605e5c, #605e5c) 51% center / 2px 7px no-repeat;
		height: 14px;
		width: 125px;
	}
	.zoom input::-webkit-slider-thumb {
		appearance: none;
		background: #605e5c;
		height: 13px;
		width: 5px;
	}
	.percent {
		margin: 0 15px 0 12px;
	}
</style>
